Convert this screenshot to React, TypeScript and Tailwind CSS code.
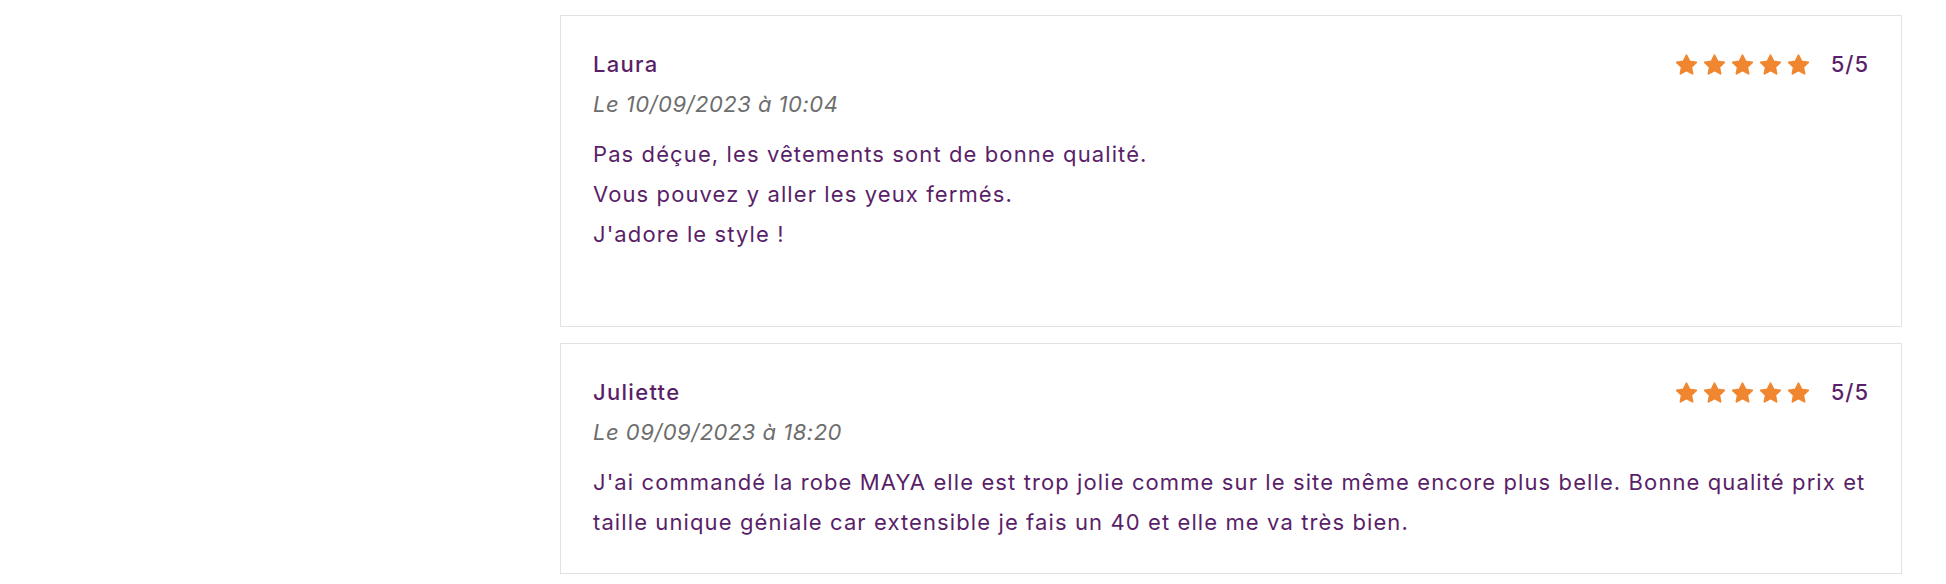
import React from "react";

/**
 * Customer reviews list
 */

interface Review {
  id: number;
  author: string;
  date: string;
  rating: number;
  lines: string[];
  minHeight?: boolean;
}

const reviews: Review[] = [
  {
    id: 1,
    author: "Laura",
    date: "Le 10/09/2023 à 10:04",
    rating: 5,
    lines: [
      "Pas déçue, les vêtements sont de bonne qualité.",
      "Vous pouvez y aller les yeux fermés.",
      "J'adore le style !",
    ],
    minHeight: true,
  },
  {
    id: 2,
    author: "Juliette",
    date: "Le 09/09/2023 à 18:20",
    rating: 5,
    lines: [
      "J'ai commandé la robe MAYA elle est trop jolie comme sur le site même encore plus belle. Bonne qualité prix et taille unique géniale car extensible je fais un 40 et elle me va très bien.",
    ],
  },
];

function StarIcon() {
  return (
    <svg viewBox="2 1.9 20 19.6" className="w-[21px] h-[21px]" aria-hidden="true">
      <path
        d="M12 2.8l2.9 6 6.5.8-4.8 4.5 1.2 6.5L12 17.4l-5.8 3.2 1.2-6.5-4.8-4.5 6.5-.8z"
        fill="#f0862f"
        stroke="#f0862f"
        strokeWidth="1.6"
        strokeLinejoin="round"
      />
    </svg>
  );
}

function ReviewCard({ review }: { review: Review }) {
  return (
    <div
      className={`border border-[#e2e2e2] bg-white pt-[28px] pb-[31px] pl-[32px] pr-[32px] ${
        review.minHeight ? "min-h-[312px]" : ""
      }`}
    >
      <div className="flex items-center justify-between">
        <span className="text-[22px] leading-[40px] font-medium tracking-[1.3px] text-[#5a1f68]">
          {review.author}
        </span>
        <div className="flex items-center">
          <div className="flex items-center gap-[7px]">
            {Array.from({ length: review.rating }).map((_, i) => (
              <StarIcon key={i} />
            ))}
          </div>
          <span className="ml-[22px] text-[22px] leading-[40px] font-medium tracking-[1px] text-[#5a1f68]">
            {review.rating}/5
          </span>
        </div>
      </div>
      <div className="text-[22px] leading-[40px] italic tracking-[0.5px] text-[#6d6d6d]">
        {review.date}
      </div>
      <div className="mt-[10px] text-[22px] leading-[40px] tracking-[1.1px] text-[#5a1f68]">
        {review.lines.map((line, i) => (
          <p key={i}>{line}</p>
        ))}
      </div>
    </div>
  );
}

export default function App() {
  return (
    <div
      className="w-[1946px] h-[584px] bg-white flex pt-[15px] overflow-hidden"
      style={{ fontFamily: 'Inter, "Open Sans", sans-serif' }}
    >
      <div className="w-[560px] shrink-0" />
      <div className="w-[1342px] flex flex-col gap-[16px]">
        {reviews.map((r) => (
          <ReviewCard key={r.id} review={r} />
        ))}
      </div>
    </div>
  );
}
